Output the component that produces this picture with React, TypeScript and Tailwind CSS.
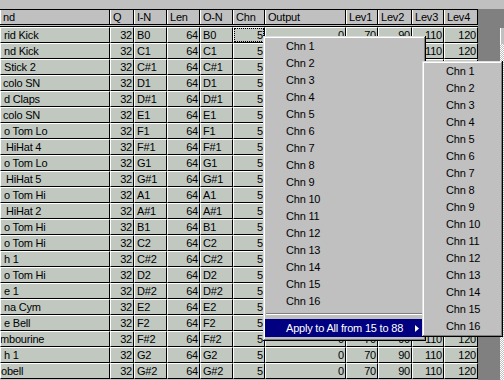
import React from 'react';

// ==========================================
// DATA
// ==========================================

interface Column {
  key: string;
  title: string;
  width: string;
  right?: boolean;
}

const columns: Column[] = [
  { key: 'name', title: 'nd', width: 'w-[110px]' },
  { key: 'q', title: 'Q', width: 'w-[24px]', right: true },
  { key: 'in', title: 'I-N', width: 'w-[33px]' },
  { key: 'len', title: 'Len', width: 'w-[33px]', right: true },
  { key: 'on', title: 'O-N', width: 'w-[33px]' },
  { key: 'chn', title: 'Chn', width: 'w-[32px]', right: true },
  { key: 'out', title: 'Output', width: 'w-[81px]', right: true },
  { key: 'l1', title: 'Lev1', width: 'w-[32px]', right: true },
  { key: 'l2', title: 'Lev2', width: 'w-[34px]', right: true },
  { key: 'l3', title: 'Lev3', width: 'w-[32px]', right: true },
  { key: 'l4', title: 'Lev4', width: 'w-[34px]', right: true },
];

// nomi tagliati a sinistra (tabella scrollata in orizzontale)
const names: [string, string][] = [
  ['rid Kick', 'pl-[1px]'],
  ['nd Kick', 'pl-[1px]'],
  ['Stick 2', 'pl-[1px]'],
  ['colo SN', 'pl-[0px]'],
  ['d Claps', 'pl-[1px]'],
  ['colo SN', 'pl-[0px]'],
  ['o Tom Lo', 'pl-[1px]'],
  ['HiHat 4', 'pl-[3px]'],
  ['o Tom Lo', 'pl-[1px]'],
  ['HiHat 5', 'pl-[3px]'],
  ['o Tom Hi', 'pl-[1px]'],
  ['HiHat 2', 'pl-[3px]'],
  ['o Tom Hi', 'pl-[1px]'],
  ['o Tom Hi', 'pl-[1px]'],
  ['h 1', 'pl-[1px]'],
  ['o Tom Hi', 'pl-[1px]'],
  ['e 1', 'pl-[1px]'],
  ['na Cym', 'pl-[1px]'],
  ['e Bell', 'pl-[1px]'],
  ['mbourine', 'pl-[0px] -ml-[3px]'],
  ['h 1', 'pl-[1px]'],
  ['obell', 'pl-[0px] -ml-[2px]'],
];

const notes = ['B0', 'C1', 'C#1', 'D1', 'D#1', 'E1', 'F1', 'F#1', 'G1', 'G#1', 'A1', 'A#1', 'B1', 'C2', 'C#2', 'D2', 'D#2', 'E2', 'F2', 'F#2', 'G2', 'G#2'];

const channels = Array.from({ length: 16 }, (_, i) => `Chn ${i + 1}`);

// ==========================================
// COMPONENTI
// ==========================================

function GridRow({ index }: { index: number }) {
  const [name, nameCls] = names[index];
  const values: Record<string, string> = {
    name,
    q: '32',
    in: notes[index],
    len: '64',
    on: notes[index],
    chn: '5',
    out: '0',
    l1: '70',
    l2: '90',
    l3: '110',
    l4: '120',
  };

  return (
    <div className="flex h-[16px]">
      {columns.map((col) => (
        <div
          key={col.key}
          className={`${col.width} relative h-full shrink-0 overflow-hidden whitespace-nowrap border-t border-l border-t-white border-l-white border-r border-b border-r-black border-b-black bg-[#c0c8c0] flex items-center ${
            col.right ? 'justify-end pr-[1px]' : 'pl-[2px]'
          }`}
        >
          <span className={col.key === 'name' ? nameCls : ''}>{values[col.key]}</span>
          {index === 0 && col.key === 'chn' && (
            <div className="absolute inset-0 border border-dotted border-black" />
          )}
        </div>
      ))}
    </div>
  );
}

function MenuItem({ label, padding }: { label: string; padding: string }) {
  return (
    <div className={`h-[17px] flex items-center ${padding} whitespace-nowrap text-black`}>
      {label}
    </div>
  );
}

const menuFrame =
  'absolute bg-[#c0c0c0] p-[2px] shadow-[inset_-1px_-1px_0_#000000,inset_1px_1px_0_#dfdfdf,inset_-2px_-2px_0_#808080,inset_2px_2px_0_#ffffff]';

export default function App() {
  return (
    <div className="relative w-[504px] h-[380px] overflow-hidden bg-[#c0c0c0] font-['Liberation_Sans',Arial,sans-serif] text-[11px] tracking-[-0.2px] leading-none text-black">
      {/* striscia superiore */}
      <div className="h-[9px]" />

      <div className="flex">
        {/* griglia */}
        <div className="w-[478px] shrink-0">
          <div className="flex h-[16px] border-t border-b border-black">
            {columns.map((col) => (
              <div
                key={col.key}
                className={`${col.width} shrink-0 h-full border-l border-l-white border-r border-r-black flex items-center pl-[2px] whitespace-nowrap overflow-hidden`}
              >
                {col.title}
              </div>
            ))}
          </div>
          <div className="h-[2px] border-b border-black" />
          {names.map((_, i) => (
            <GridRow key={i} index={i} />
          ))}
        </div>

        {/* area vuota + scrollbar */}
        <div className="flex-1 flex h-[371px] bg-[#808080]">
          <div className="w-[22px]" />
          <div className="flex-1 flex flex-col">
            <div className="h-[19px]" />
            <div className="h-[16px] bg-[#c0c0c0] border-l border-white" />
            <div className="flex-1 bg-[image:repeating-conic-gradient(#c0c0c0_0%_25%,#ffffff_0%_50%)] bg-[length:2px_2px]" />
          </div>
        </div>
      </div>

      {/* menu contestuale */}
      <div className={`${menuFrame} left-[263px] top-[36px] w-[163px] h-[305px]`}>
        {channels.map((c) => (
          <MenuItem key={c} label={c} padding="pl-[21px]" />
        ))}
        <div className="mt-[3px] mb-[4px] mx-[1px] border-t border-t-[#808080] border-b border-b-white" />
        <div className="h-[18px] bg-[#000080] text-white flex items-center pl-[21px] pr-[5px]">
          <span className="flex-1">Apply to All from 15 to 88</span>
          <svg width="4" height="7" viewBox="0 0 4 7">
            <polygon points="0,0 4,3.5 0,7" fill="#ffffff" />
          </svg>
        </div>
      </div>

      {/* sottomenu */}
      <div className={`${menuFrame} left-[422px] top-[61px] w-[81px] h-[276px]`}>
        {channels.map((c) => (
          <MenuItem key={c} label={c} padding="pl-[22px]" />
        ))}
      </div>
    </div>
  );
}
